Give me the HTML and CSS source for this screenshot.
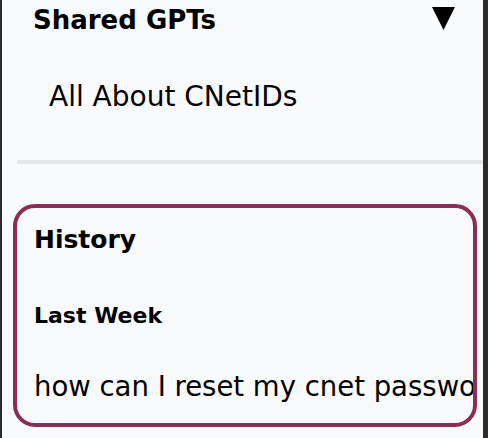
FILE: index.html
```html
<!DOCTYPE html>
<html lang="en">
<head>
    <meta charset="UTF-8">
    <meta name="viewport" content="width=device-width, initial-scale=1.0">
    <title>Sidebar</title>
    <link rel="stylesheet" href="styles.css">
</head>
<body>
    <aside class="sidebar">
        <section class="shared">
            <div class="section-head">
                <h2>Shared GPTs</h2>
                <svg class="caret" width="23" height="23" viewBox="0 0 23 23" aria-hidden="true">
                    <polygon points="0,0 23,0 11.5,23" fill="#000"/>
                </svg>
            </div>
            <ul class="gpt-list">
                <li>All About CNetIDs</li>
            </ul>
        </section>

        <hr class="divider">

        <section class="history">
            <h2>History</h2>
            <h3>Last Week</h3>
            <ul class="chat-list">
                <li>how can I reset my cnet password?</li>
            </ul>
        </section>
    </aside>
</body>
</html>
```

FILE: styles.css
```css
body {
    margin: 0;
    height: 100vh;
    background-color: #2b2b2b;
    font-family: "DejaVu Sans", sans-serif;
    color: #000;
}
.sidebar {
    width: 481px;
    height: 100%;
    border-left: 2px solid #2b2b2b;
    background-color: #f9fafb;
    overflow: hidden;
}
.section-head {
    display: flex;
    justify-content: space-between;
    align-items: center;
    padding: 0 28px 0 31px;
}
.section-head h2 {
    margin: 0;
    font-size: 26px;
    line-height: 40px;
    font-weight: bold;
}
.caret {
    display: block;
    margin-top: -3px;
}
.gpt-list {
    list-style: none;
    margin: 37px 0 0;
    padding: 0 0 0 47px;
}
.gpt-list li {
    font-size: 28px;
    line-height: 40px;
}
.divider {
    margin: 43px 0 0 15px;
    height: 4px;
    border: none;
    background-color: #e5e7eb;
}
.history {
    margin: 40px 6px 0 11px;
    padding: 12px 17px 17px;
    border: 4px solid #8c2d55;
    border-radius: 22px;
    overflow: hidden;
}
.history h2 {
    margin: 0;
    font-size: 25px;
    line-height: 40px;
    font-weight: bold;
}
.history h3 {
    margin: 40px 0 0;
    font-size: 22px;
    line-height: 32px;
    font-weight: bold;
}
.chat-list {
    list-style: none;
    margin: 34px 0 0;
    padding: 0;
}
.chat-list li {
    font-size: 27.5px;
    line-height: 40px;
    white-space: nowrap;
}
```
